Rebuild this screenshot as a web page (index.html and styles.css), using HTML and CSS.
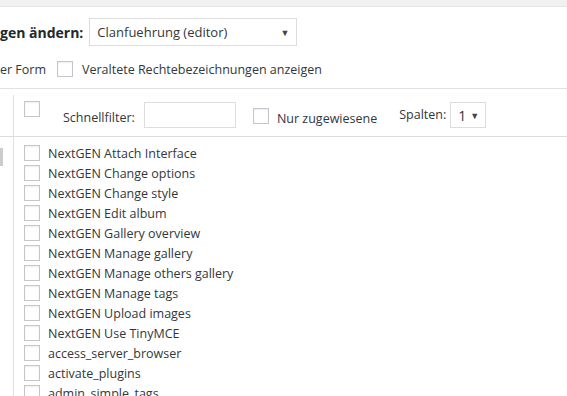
FILE: index.html
```html
<!DOCTYPE html>
<html lang="de">
<head>
    <meta charset="UTF-8">
    <title>Rechte ändern</title>
    <link rel="stylesheet" href="styles.css">
</head>
<body>

<div class="topbar"></div>

<div class="role-head">
    <h2 class="role-title">gen ändern:</h2>
    <div class="select role-select">
        <span>Clanfuehrung (editor)</span>
        <span class="arrow">▼</span>
    </div>
</div>

<div class="options">
    <span class="opt-text">er Form</span>
    <input type="checkbox" class="check">
    <span class="opt-text">Veraltete Rechtebezeichnungen anzeigen</span>
</div>

<div class="toolbar">
    <div class="gutter"></div>
    <div class="pane toolbar-pane">
        <input type="checkbox" class="check select-all">
        <label class="filter-label">Schnellfilter:</label>
        <input type="text" class="filter-input">
        <input type="checkbox" class="check assigned-check">
        <span class="assigned-label">Nur zugewiesene</span>
        <span class="cols-label">Spalten:</span>
        <div class="select cols-select">
            <span class="cols-value">1</span>
            <span class="arrow">▼</span>
        </div>
    </div>
</div>

<div class="list-wrap">
    <div class="gutter"><span class="grip"></span></div>
    <div class="pane">
        <ul class="caps" id="caps"></ul>
    </div>
</div>

<script>
    const caps = [
        'NextGEN Attach Interface',
        'NextGEN Change options',
        'NextGEN Change style',
        'NextGEN Edit album',
        'NextGEN Gallery overview',
        'NextGEN Manage gallery',
        'NextGEN Manage others gallery',
        'NextGEN Manage tags',
        'NextGEN Upload images',
        'NextGEN Use TinyMCE',
        'access_server_browser',
        'activate_plugins',
        'admin_simple_tags'
    ];

    const list = document.getElementById('caps');
    list.innerHTML = caps.map(c => `
        <li class="cap"><input type="checkbox" class="check"><span>${c}</span></li>
    `).join('');
</script>
</body>
</html>
```

FILE: styles.css
```css
body {
    margin: 0;
    background: #fff;
    color: #32373c;
    font-family: 'Open Sans', sans-serif;
    font-size: 12.5px;
    overflow: hidden;
}

.topbar {
    height: 6px;
    background: #f1f1f1;
    border-bottom: 1px solid #e5e5e5;
}

.role-head {
    display: flex;
    align-items: center;
    margin-top: 11px;
    height: 28px;
}

.role-title {
    margin: 0 6px 0 0;
    font-size: 14px;
    font-weight: 700;
    color: #23282d;
}

.select {
    display: flex;
    align-items: center;
    justify-content: space-between;
    box-sizing: border-box;
    height: 28px;
    border: 1px solid #ddd;
    background: #fff;
    color: #32373c;
}

.role-select {
    width: 208px;
    padding: 0 7px 0 7px;
    font-size: 13px;
}

.arrow {
    font-size: 9px;
    color: #444;
}

.options {
    display: flex;
    align-items: center;
    margin-top: 14px;
    height: 18px;
}

.options .check {
    margin: 0 9px 0 11px;
}

.check {
    appearance: none;
    box-sizing: border-box;
    width: 16px;
    height: 16px;
    margin: 0;
    border: 1px solid #c3c6ca;
    background: #fff;
    box-shadow: inset 0 1px 2px rgba(0, 0, 0, 0.07);
    flex: none;
}

.toolbar {
    display: flex;
    margin-top: 10px;
    border-top: 1px solid #e1e1e1;
    border-bottom: 1px solid #dcdcdc;
}

.gutter {
    width: 13px;
    flex: none;
}

.pane {
    flex: 1;
    border-left: 1px solid #e1e1e1;
}

.toolbar-pane {
    display: flex;
    align-items: flex-start;
    margin-top: 6px;
    padding: 6px 0 0 10px;
    height: 41px;
    box-sizing: border-box;
}

.filter-label {
    margin: 8px 9px 0 23px;
}

.filter-input {
    box-sizing: border-box;
    width: 92px;
    height: 26px;
    margin: 1px 0 0 0;
    border: 1px solid #ddd;
}

.assigned-check {
    margin: 7px 0 0 17px;
}

.assigned-label {
    margin: 9px 0 0 8px;
}

.cols-label {
    margin: 5px 4px 0 22px;
}

.cols-select {
    width: 36px;
    height: 26px;
    margin-top: 1px;
    padding: 0 6px 0 7px;
}

.cols-value {
    font-size: 14px;
}

.list-wrap {
    display: flex;
}

.grip {
    display: block;
    width: 3px;
    height: 18px;
    margin-top: 11px;
    background: #ccc;
}

.caps {
    list-style: none;
    margin: 0;
    padding: 6px 0 0 10px;
}

.cap {
    display: flex;
    align-items: center;
    height: 20px;
}

.cap .check {
    margin-right: 8px;
}
```
